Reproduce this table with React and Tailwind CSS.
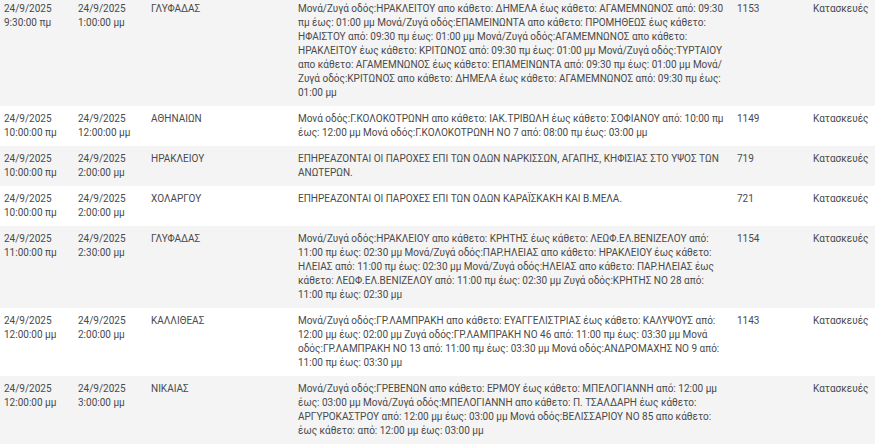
const rows = [
    {
        from: ['24/9/2025', '9:30:00 πμ'],
        to: ['24/9/2025', '1:00:00 μμ'],
        area: 'ΓΛΥΦΑΔΑΣ',
        lines: [
            'Μονά/Ζυγά οδός:ΗΡΑΚΛΕΙΤΟΥ απο κάθετο: ΔΗΜΕΛΑ έως κάθετο: ΑΓΑΜΕΜΝΩΝΟΣ από: 09:30',
            'πμ έως: 01:00 μμ Μονά/Ζυγά οδός:ΕΠΑΜΕΙΝΩΝΤΑ απο κάθετο: ΠΡΟΜΗΘΕΩΣ έως κάθετο:',
            'ΗΦΑΙΣΤΟΥ από: 09:30 πμ έως: 01:00 μμ Μονά/Ζυγά οδός:ΑΓΑΜΕΜΝΩΝΟΣ απο κάθετο:',
            'ΗΡΑΚΛΕΙΤΟΥ έως κάθετο: ΚΡΙΤΩΝΟΣ από: 09:30 πμ έως: 01:00 μμ Μονά/Ζυγά οδός:ΤΥΡΤΑΙΟΥ',
            'απο κάθετο: ΑΓΑΜΕΜΝΩΝΟΣ έως κάθετο: ΕΠΑΜΕΙΝΩΝΤΑ από: 09:30 πμ έως: 01:00 μμ Μονά/',
            'Ζυγά οδός:ΚΡΙΤΩΝΟΣ απο κάθετο: ΔΗΜΕΛΑ έως κάθετο: ΑΓΑΜΕΜΝΩΝΟΣ από: 09:30 πμ έως:',
            '01:00 μμ',
        ],
        id: '1153',
    },
    {
        from: ['24/9/2025', '10:00:00 πμ'],
        to: ['24/9/2025', '12:00:00 μμ'],
        area: 'ΑΘΗΝΑΙΩΝ',
        lines: [
            'Μονά οδός:Γ.ΚΟΛΟΚΟΤΡΩΝΗ απο κάθετο: ΙΑΚ.ΤΡΙΒΩΛΗ έως κάθετο: ΣΟΦΙΑΝΟΥ από: 10:00 πμ',
            'έως: 12:00 μμ Μονά οδός:Γ.ΚΟΛΟΚΟΤΡΩΝΗ ΝΟ 7 από: 08:00 πμ έως: 03:00 μμ',
        ],
        id: '1149',
    },
    {
        from: ['24/9/2025', '10:00:00 πμ'],
        to: ['24/9/2025', '2:00:00 μμ'],
        area: 'ΗΡΑΚΛΕΙΟΥ',
        lines: [
            'ΕΠΗΡΕΑΖΟΝΤΑΙ ΟΙ ΠΑΡΟΧΕΣ ΕΠΙ ΤΩΝ ΟΔΩΝ ΝΑΡΚΙΣΣΩΝ, ΑΓΑΠΗΣ, ΚΗΦΙΣΙΑΣ ΣΤΟ ΥΨΟΣ ΤΩΝ',
            'ΑΝΩΤΕΡΩΝ.',
        ],
        id: '719',
    },
    {
        from: ['24/9/2025', '10:00:00 πμ'],
        to: ['24/9/2025', '2:00:00 μμ'],
        area: 'ΧΟΛΑΡΓΟΥ',
        lines: ['ΕΠΗΡΕΑΖΟΝΤΑΙ ΟΙ ΠΑΡΟΧΕΣ ΕΠΙ ΤΩΝ ΟΔΩΝ ΚΑΡΑΪΣΚΑΚΗ ΚΑΙ Β.ΜΕΛΑ.'],
        id: '721',
    },
    {
        from: ['24/9/2025', '11:00:00 πμ'],
        to: ['24/9/2025', '2:30:00 μμ'],
        area: 'ΓΛΥΦΑΔΑΣ',
        lines: [
            'Μονά/Ζυγά οδός:ΗΡΑΚΛΕΙΟΥ απο κάθετο: ΚΡΗΤΗΣ έως κάθετο: ΛΕΩΦ.ΕΛ.ΒΕΝΙΖΕΛΟΥ από:',
            '11:00 πμ έως: 02:30 μμ Μονά/Ζυγά οδός:ΠΑΡ.ΗΛΕΙΑΣ απο κάθετο: ΗΡΑΚΛΕΙΟΥ έως κάθετο:',
            'ΗΛΕΙΑΣ από: 11:00 πμ έως: 02:30 μμ Μονά/Ζυγά οδός:ΗΛΕΙΑΣ απο κάθετο: ΠΑΡ.ΗΛΕΙΑΣ έως',
            'κάθετο: ΛΕΩΦ.ΕΛ.ΒΕΝΙΖΕΛΟΥ από: 11:00 πμ έως: 02:30 μμ Ζυγά οδός:ΚΡΗΤΗΣ ΝΟ 28 από:',
            '11:00 πμ έως: 02:30 μμ',
        ],
        id: '1154',
    },
    {
        from: ['24/9/2025', '12:00:00 μμ'],
        to: ['24/9/2025', '2:00:00 μμ'],
        area: 'ΚΑΛΛΙΘΕΑΣ',
        lines: [
            'Μονά/Ζυγά οδός:ΓΡ.ΛΑΜΠΡΑΚΗ απο κάθετο: ΕΥΑΓΓΕΛΙΣΤΡΙΑΣ έως κάθετο: ΚΑΛΥΨΟΥΣ από:',
            '12:00 μμ έως: 02:00 μμ Ζυγά οδός:ΓΡ.ΛΑΜΠΡΑΚΗ ΝΟ 46 από: 11:00 πμ έως: 03:30 μμ Μονά',
            'οδός:ΓΡ.ΛΑΜΠΡΑΚΗ ΝΟ 13 από: 11:00 πμ έως: 03:30 μμ Μονά οδός:ΑΝΔΡΟΜΑΧΗΣ ΝΟ 9 από:',
            '11:00 πμ έως: 03:30 μμ',
        ],
        id: '1143',
    },
    {
        from: ['24/9/2025', '12:00:00 μμ'],
        to: ['24/9/2025', '3:00:00 μμ'],
        area: 'ΝΙΚΑΙΑΣ',
        lines: [
            'Μονά/Ζυγά οδός:ΓΡΕΒΕΝΩΝ απο κάθετο: ΕΡΜΟΥ έως κάθετο: ΜΠΕΛΟΓΙΑΝΝΗ από: 12:00 μμ',
            'έως: 03:00 μμ Μονά/Ζυγά οδός:ΜΠΕΛΟΓΙΑΝΝΗ απο κάθετο: Π. ΤΣΑΛΔΑΡΗ έως κάθετο:',
            'ΑΡΓΥΡΟΚΑΣΤΡΟΥ από: 12:00 μμ έως: 03:00 μμ Μονά οδός:ΒΕΛΙΣΣΑΡΙΟΥ ΝΟ 85 απο κάθετο:',
            'έως κάθετο: από: 12:00 μμ έως: 03:00 μμ',
        ],
        id: '',
    },
];

export default function App() {
    return (
        <div className="h-[444px] w-[875px] overflow-hidden bg-white font-['Roboto',sans-serif] text-[10px] leading-[14px] text-[#4a4a4a]">
            <table className="-mt-[4px] w-[875px] table-fixed border-collapse">
                <colgroup>
                    <col className="w-[74px]" />
                    <col className="w-[73px]" />
                    <col className="w-[147px]" />
                    <col className="w-[439px]" />
                    <col className="w-[76px]" />
                    <col className="w-[66px]" />
                </colgroup>
                <tbody>
                    {rows.map((row, i) => (
                        <tr
                            key={i}
                            className={i % 2 === 0 ? 'bg-[#f4f4f4]' : 'bg-white'}
                        >
                            <td className="px-1 py-[6px] align-top">
                                {row.from[0]}
                                <br />
                                {row.from[1]}
                            </td>
                            <td className="px-1 py-[6px] align-top">
                                {row.to[0]}
                                <br />
                                {row.to[1]}
                            </td>
                            <td className="px-1 py-[6px] align-top">{row.area}</td>
                            <td className="px-1 py-[6px] align-top whitespace-nowrap">
                                {row.lines.map((line, j) => (
                                    <div key={j}>{line}</div>
                                ))}
                            </td>
                            <td className="px-1 py-[6px] align-top">{row.id}</td>
                            <td className="px-1 py-[6px] align-top">Κατασκευές</td>
                        </tr>
                    ))}
                </tbody>
            </table>
        </div>
    );
}
